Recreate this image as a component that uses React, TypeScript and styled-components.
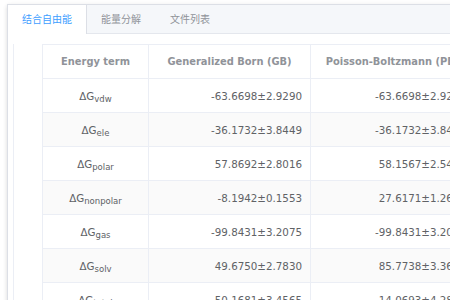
import React from "react";
import styled, { createGlobalStyle } from "styled-components";

const GlobalStyle = createGlobalStyle`
  body {
    margin: 0;
    background: #ffffff;
    overflow: hidden;
    font-family: "DejaVu Sans", "Noto Sans CJK SC", sans-serif;
  }
`;

const Page = styled.div`
  padding: 4px 0 0 7px;
  width: 443px;
  height: 296px;
  overflow: hidden;
`;
const Card = styled.div`
  width: 700px;
  height: 400px;
  border: 1px solid #dcdfe6;
  background: #fff;
  box-shadow: 0 2px 4px rgba(0, 0, 0, 0.12), 0 0 6px rgba(0, 0, 0, 0.04);
`;
const TabBar = styled.div`
  display: flex;
  height: 28px;
  background: #f5f7fa;
  border-bottom: 1px solid #e4e7ed;
`;
const Tab = styled.div<{ $active?: boolean }>`
  line-height: 29px;
  padding: 0 14px;
  font-size: 10px;
  color: ${(p) => (p.$active ? "#409eff" : "#909399")};
  background: ${(p) => (p.$active ? "#ffffff" : "transparent")};
  border-right: 1px solid ${(p) => (p.$active ? "#dcdfe6" : "transparent")};
  margin-bottom: ${(p) => (p.$active ? "-1px" : "0")};
  height: ${(p) => (p.$active ? "29px" : "28px")};
`;
const Pane = styled.div`
  margin: 10px 0 0 5px;
  padding-left: 28px;
  border-left: 1px solid #ebeef5;
  height: 300px;
`;
const Table = styled.table`
  border-collapse: collapse;
  table-layout: fixed;
  border: 1px solid #ebeef5;
`;
const HeadCell = styled.th<{ $w: number }>`
  width: ${(p) => p.$w}px;
  height: 34px;
  padding: 0 10px;
  box-sizing: border-box;
  border: 1px solid #ebeef5;
  font-size: 9.9px;
  font-weight: bold;
  color: #909399;
  text-align: center;
  white-space: nowrap;
`;
const Row = styled.tr<{ $striped: boolean }>`
  background: ${(p) => (p.$striped ? "#fafafa" : "#ffffff")};
`;
const Cell = styled.td<{ $align: "center" | "right" }>`
  height: 34px;
  padding: 0 8px;
  box-sizing: border-box;
  border: 1px solid #ebeef5;
  font-size: 10.3px;
  color: #606266;
  text-align: ${(p) => p.$align};
  white-space: nowrap;
`;
const Sub = styled.sub`
  font-size: 8.5px;
  line-height: 0;
  vertical-align: -2px;
`;

const rows = [
  ["vdw", "-63.6698±2.9290", "-63.6698±2.9290"],
  ["ele", "-36.1732±3.8449", "-36.1732±3.8449"],
  ["polar", "57.8692±2.8016", "58.1567±2.5415"],
  ["nonpolar", "-8.1942±0.1553", "27.6171±1.2634"],
  ["gas", "-99.8431±3.2075", "-99.8431±3.2075"],
  ["solv", "49.6750±2.7830", "85.7738±3.3612"],
  ["total", "-50.1681±3.4565", "-14.0693±4.2871"],
];

export default function App() {
  return (
    <Page>
      <GlobalStyle />
      <Card>
        <TabBar>
          <Tab $active>结合自由能</Tab>
          <Tab>能量分解</Tab>
          <Tab>文件列表</Tab>
        </TabBar>
        <Pane>
          <Table>
            <thead>
              <tr>
                <HeadCell $w={106}>Energy term</HeadCell>
                <HeadCell $w={162}>Generalized Born (GB)</HeadCell>
                <HeadCell $w={164}>Poisson-Boltzmann (PB)</HeadCell>
              </tr>
            </thead>
            <tbody>
              {rows.map((r, i) => (
                <Row key={r[0]} $striped={i % 2 === 1}>
                  <Cell $align="center">
                    ΔG<Sub>{r[0]}</Sub>
                  </Cell>
                  <Cell $align="right">{r[1]}</Cell>
                  <Cell $align="right">{r[2]}</Cell>
                </Row>
              ))}
            </tbody>
          </Table>
        </Pane>
      </Card>
    </Page>
  );
}
